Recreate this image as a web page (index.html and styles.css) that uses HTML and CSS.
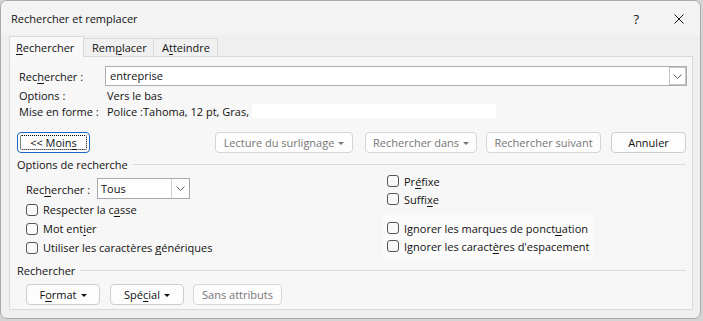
FILE: index.html
```html
<!DOCTYPE html>
<html lang="fr">
<head>
    <meta charset="UTF-8">
    <meta name="viewport" content="width=device-width, initial-scale=1.0">
    <title>Rechercher et remplacer</title>
    <link rel="stylesheet" href="styles.css">
</head>
<body>
    <div class="window">
        <div class="titlebar">
            <span class="title">Rechercher et remplacer</span>
            <span class="help">?</span>
            <svg class="close" width="10" height="10" viewBox="0 0 10 10">
                <path d="M0.5 0.5 L9.5 9.5 M9.5 0.5 L0.5 9.5" stroke="#1a1a1a" stroke-width="1" fill="none"/>
            </svg>
        </div>

        <div class="tabs">
            <div class="tab active"><u>R</u>echercher</div>
            <div class="tab">Rem<u>p</u>lacer</div>
            <div class="tab">A<u>t</u>teindre</div>
        </div>

        <div class="panel">
            <div class="find-row">
                <span class="find-label">Rec<u>h</u>ercher :</span>
                <div class="combo">
                    <span class="combo-text">entreprise</span>
                    <span class="combo-btn">
                        <svg width="9" height="5" viewBox="0 0 9 5"><path d="M0.5 0.5 L4.5 4.5 L8.5 0.5" stroke="#606060" fill="none"/></svg>
                    </span>
                </div>
            </div>
            <div class="info-row">
                <span class="info-label">Options :</span>
                <span>Vers le bas</span>
            </div>
            <div class="info-row">
                <span class="info-label">Mise en forme :</span>
                <span>Police :Tahoma, 12 pt, Gras,</span>
                <span class="blank"></span>
            </div>

            <div class="actions">
                <button class="btn btn-moins"><span class="focus">&lt;&lt; Moin<u>s</u></span></button>
                <button class="btn disabled btn-lecture">Lecture du surlignage<span class="caret"></span></button>
                <button class="btn disabled btn-dans">Rechercher dans<span class="caret"></span></button>
                <button class="btn disabled btn-suivant">Rechercher suivant</button>
                <button class="btn btn-annuler">Annuler</button>
            </div>

            <div class="group-title">
                <span>Options de recherche</span>
                <span class="rule"></span>
            </div>

            <div class="options">
                <div class="col-left">
                    <div class="scope-row">
                        <span class="scope-label">Rec<u>h</u>ercher :</span>
                        <div class="select">
                            <span class="select-text">Tous</span>
                            <span class="select-btn">
                                <svg width="9" height="5" viewBox="0 0 9 5"><path d="M0.5 0.5 L4.5 4.5 L8.5 0.5" stroke="#606060" fill="none"/></svg>
                            </span>
                        </div>
                    </div>
                    <div class="check row-left"><span class="box"></span><span>Respecter la c<u>a</u>sse</span></div>
                    <div class="check row-left"><span class="box"></span><span>Mot ent<u>i</u>er</span></div>
                    <div class="check row-left"><span class="box"></span><span>Utiliser les caractères <u>g</u>énériques</span></div>
                </div>
                <div class="col-right">
                    <div class="check row-right"><span class="box"></span><span>Pr<u>é</u>fixe</span></div>
                    <div class="check row-right"><span class="box"></span><span>Suffi<u>x</u>e</span></div>
                    <div class="ignore-box">
                        <div class="check row-right"><span class="box"></span><span>Ignorer les marques de ponct<u>u</u>ation</span></div>
                        <div class="check row-right"><span class="box"></span><span>Ignorer les caract<u>è</u>res d'espacement</span></div>
                    </div>
                </div>
            </div>

            <div class="group-title">
                <span>Rechercher</span>
                <span class="rule"></span>
            </div>

            <div class="bottom-buttons">
                <button class="btn btn-format"><span>F<u>o</u>rmat</span><span class="caret"></span></button>
                <button class="btn btn-special"><span>Spé<u>c</u>ial</span><span class="caret"></span></button>
                <button class="btn disabled btn-sans">Sans attributs</button>
            </div>
        </div>
    </div>
</body>
</html>
```

FILE: styles.css
```css
body {
    margin: 0;
    padding: 0;
    background-color: #d4d4d4;
    font-family: "Open Sans", "Noto Sans", sans-serif;
    font-size: 11px;
    color: #111;
}
u {
    text-decoration: underline;
    text-underline-offset: 2px;
}
.window {
    box-sizing: border-box;
    width: 701px;
    height: 319px;
    background-color: #efefef;
    border: 1px solid #a9a9a9;
    border-radius: 7px;
    overflow: hidden;
}
.titlebar {
    height: 34px;
    display: flex;
    align-items: center;
    padding-left: 10px;
    background-color: #f3f3f3;
}
.title {
    line-height: 34px;
    padding-top: 1px;
}
.help {
    margin-left: auto;
    margin-right: 35px;
    font-size: 13px;
    padding-top: 1px;
}
.close {
    margin-right: 16px;
    margin-top: 1px;
}
.tabs {
    position: relative;
    z-index: 1;
    display: flex;
    align-items: flex-end;
    height: 22px;
    margin-bottom: -1px;
    padding-left: 8px;
}
.tab {
    box-sizing: border-box;
    height: 18px;
    margin-bottom: 1px;
    margin-left: -1px;
    padding: 0 8px;
    line-height: 17px;
    background-color: #f0f0f0;
    border: 1px solid #dadada;
    border-bottom: none;
}
.tab:nth-child(2) {
    width: 71px;
}
.tab:nth-child(3) {
    width: 65px;
}
.tab.active {
    width: 75px;
    height: 21px;
    margin: 0;
    padding: 0 6px;
    line-height: 21px;
    background-color: #f9f9f9;
    border-color: #dadada;
}
.panel {
    box-sizing: border-box;
    width: 684px;
    margin-left: 8px;
    height: 254px;
    background-color: #f7f7f7;
    border: 1px solid #dadada;
}
.find-row {
    display: flex;
    align-items: center;
    margin-top: 9px;
    padding-left: 9px;
    height: 20px;
}
.find-label {
    width: 86px;
}
.combo {
    box-sizing: border-box;
    width: 582px;
    height: 20px;
    display: flex;
    align-items: center;
    background-color: #fff;
    border: 1px solid #adadad;
}
.combo-text {
    flex: 1;
    padding-left: 4px;
    line-height: 18px;
}
.combo-btn {
    box-sizing: border-box;
    width: 17px;
    height: 18px;
    display: flex;
    align-items: center;
    justify-content: center;
    border: 1px solid #c6c6c6;
}
.info-row {
    display: flex;
    align-items: center;
    height: 16px;
    padding-left: 9px;
}
.find-row + .info-row {
    margin-top: 1px;
}
.info-label {
    width: 88px;
}
.blank {
    width: 244px;
    height: 14px;
    margin-left: 3px;
    background-color: #fff;
}
.actions {
    display: flex;
    margin-top: 13px;
    padding-left: 7px;
    height: 21px;
}
.btn {
    box-sizing: border-box;
    height: 21px;
    padding: 0;
    font-family: inherit;
    font-size: 11px;
    color: #111;
    background-color: #fdfdfd;
    border: 1px solid #cdcdcd;
    border-radius: 4px;
    display: flex;
    align-items: center;
    justify-content: center;
}
.btn.disabled {
    color: #767676;
    border-color: #d6d6d6;
}
.caret {
    width: 0;
    height: 0;
    margin-left: 4px;
    margin-top: 1px;
    border-left: 3px solid transparent;
    border-right: 3px solid transparent;
    border-top: 3px solid #111;
}
.btn.disabled .caret {
    border-top-color: #767676;
}
.btn-moins {
    width: 73px;
    border-color: #1a66c2;
    padding: 2px;
}
.focus {
    box-sizing: border-box;
    width: 100%;
    height: 100%;
    display: flex;
    align-items: center;
    justify-content: center;
    border: 1px dotted #000;
    border-radius: 2px;
}
.btn-lecture {
    width: 138px;
    margin-left: auto;
}
.btn-dans {
    width: 112px;
    margin-left: 12px;
}
.btn-suivant {
    width: 115px;
    margin-left: 9px;
}
.btn-annuler {
    width: 75px;
    margin-left: 10px;
    margin-right: 6px;
}
.group-title {
    display: flex;
    align-items: center;
    height: 14px;
    padding-left: 7px;
    padding-right: 6px;
}
.actions + .group-title {
    margin-top: 4px;
}
.rule {
    flex: 1;
    height: 1px;
    margin-left: 5px;
    margin-top: 1px;
    background-color: #d9d9d9;
}
.options {
    display: flex;
    height: 92px;
    padding-left: 16px;
}
.col-left {
    width: 357px;
}
.scope-row {
    display: flex;
    align-items: center;
    margin-top: 7px;
    height: 22px;
}
.scope-label {
    width: 71px;
}
.select {
    box-sizing: border-box;
    width: 93px;
    height: 21px;
    margin-top: -1px;
    display: flex;
    align-items: center;
    background-color: #fff;
    border: 1px solid #a8a8a8;
}
.select-text {
    flex: 1;
    padding-left: 3px;
}
.select-btn {
    width: 17px;
    height: 19px;
    display: flex;
    align-items: center;
    justify-content: center;
    border-left: 1px solid #cfcfcf;
}
.check {
    display: flex;
    align-items: center;
}
.box {
    box-sizing: border-box;
    width: 12px;
    height: 12px;
    margin-right: 5px;
    background-color: #f9f9f9;
    border: 1px solid #555;
    border-radius: 3px;
}
.row-left {
    height: 19px;
}
.col-right {
    width: 210px;
    padding-top: 1px;
}
.row-right {
    height: 18px;
    padding-left: 4px;
}
.ignore-box {
    margin-top: 7px;
    padding: 4px 0 5px;
    background-color: #fbfbfb;
}
.bottom-buttons {
    display: flex;
    margin-top: 7px;
    padding-left: 16px;
}
.btn-format {
    width: 74px;
}
.btn-special {
    width: 74px;
    margin-left: 10px;
}
.btn-sans {
    width: 89px;
    margin-left: 9px;
}
```
